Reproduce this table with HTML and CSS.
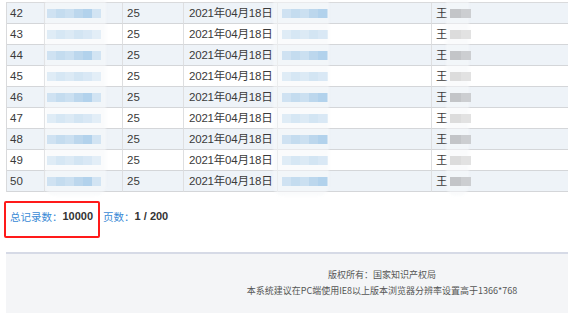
FILE: index.html
```html
<!DOCTYPE html>
<html lang="zh-CN">
<head>
<meta charset="utf-8">
<title>列表</title>
<link rel="stylesheet" href="styles.css">
</head>
<body>
<div class="page">
  <div class="table-wrap">
    <table class="grid">
      <colgroup>
        <col class="c-no"><col class="c-name"><col class="c-age"><col class="c-date"><col class="c-org"><col class="c-person">
      </colgroup>
      <tbody>
        <tr><td>42</td><td><span class="mosaic m-blue"></span></td><td>25</td><td>2021年04月18日</td><td><span class="mosaic m-blue m-org"></span></td><td>王<span class="mosaic m-gray"></span></td></tr>
        <tr><td>43</td><td><span class="mosaic m-blue"></span></td><td>25</td><td>2021年04月18日</td><td><span class="mosaic m-blue m-org"></span></td><td>王<span class="mosaic m-gray"></span></td></tr>
        <tr><td>44</td><td><span class="mosaic m-blue"></span></td><td>25</td><td>2021年04月18日</td><td><span class="mosaic m-blue m-org"></span></td><td>王<span class="mosaic m-gray"></span></td></tr>
        <tr><td>45</td><td><span class="mosaic m-blue"></span></td><td>25</td><td>2021年04月18日</td><td><span class="mosaic m-blue m-org"></span></td><td>王<span class="mosaic m-gray"></span></td></tr>
        <tr><td>46</td><td><span class="mosaic m-blue"></span></td><td>25</td><td>2021年04月18日</td><td><span class="mosaic m-blue m-org"></span></td><td>王<span class="mosaic m-gray"></span></td></tr>
        <tr><td>47</td><td><span class="mosaic m-blue"></span></td><td>25</td><td>2021年04月18日</td><td><span class="mosaic m-blue m-org"></span></td><td>王<span class="mosaic m-gray"></span></td></tr>
        <tr><td>48</td><td><span class="mosaic m-blue"></span></td><td>25</td><td>2021年04月18日</td><td><span class="mosaic m-blue m-org"></span></td><td>王<span class="mosaic m-gray"></span></td></tr>
        <tr><td>49</td><td><span class="mosaic m-blue"></span></td><td>25</td><td>2021年04月18日</td><td><span class="mosaic m-blue m-org"></span></td><td>王<span class="mosaic m-gray"></span></td></tr>
        <tr><td>50</td><td><span class="mosaic m-blue"></span></td><td>25</td><td>2021年04月18日</td><td><span class="mosaic m-blue m-org"></span></td><td>王<span class="mosaic m-gray"></span></td></tr>
      </tbody>
    </table>
    <div class="halo halo-name"></div>
    <div class="halo halo-org"></div>
    <div class="halo halo-person"></div>
  </div>

  <div class="pager">
    <span class="label">总记录数：</span><span class="num">10000</span>
    <span class="label label-pages">页数：</span><span class="num">1 / 200</span>
    <div class="mark"></div>
  </div>

  <footer class="footer">
    <p>版权所有：国家知识产权局</p>
    <p>本系统建议在PC端使用IE8以上版本浏览器分辨率设置高于1366*768</p>
  </footer>
</div>
</body>
</html>
```
FILE: styles.css
```css
html, body {
  margin: 0;
  padding: 0;
  background: #fff;
  overflow: hidden;
}
body {
  font-family: "Noto Sans CJK SC", "Noto Sans", sans-serif;
  color: #333;
}
.page {
  width: 752px;
  margin: 2px 0 0 6px;
}
.table-wrap {
  position: relative;
}
.grid {
  width: 752px;
  table-layout: fixed;
  border-collapse: separate;
  border-spacing: 0;
  border-top: 1px solid #d9dadc;
  border-left: 1px solid #d9dadc;
  font-family: "Liberation Sans", "Noto Sans CJK SC", sans-serif;
  font-size: 11.5px;
}
.c-no { width: 38px; }
.c-name { width: 78px; }
.c-age { width: 61px; }
.c-date { width: 94px; }
.c-org { width: 154px; }
.c-person { width: auto; }
.grid td {
  height: 20px;
  padding: 0 0 0 4px;
  line-height: 20px;
  border-right: 1px solid #dedfe1;
  border-bottom: 1px solid #d4d6d9;
  white-space: nowrap;
  overflow: hidden;
  color: #3a3a3a;
  vertical-align: middle;
}
.grid td:first-child { padding-left: 3px; }
.grid td:nth-child(4) { padding-left: 5px; letter-spacing: -0.2px; }
.grid tr:nth-child(odd) td { background: #eef3f8; }
.grid tr:nth-child(even) td { background: #fff; }

.mosaic {
  position: relative;
  z-index: 2;
  display: inline-block;
  vertical-align: middle;
  height: 9px;
  filter: blur(0.6px);
}
.m-blue {
  width: 54px;
  margin-left: -2px;
  background: linear-gradient(90deg,
    #cfe2f2 0 9px, #c4dcef 9px 18px, #cbe0f1 18px 27px,
    #bcd7ed 27px 36px, #b2d2ec 36px 45px, #d2e4f3 45px 54px);
}
.m-org {
  width: 46px;
  margin-left: 0;
}
.grid tr:nth-child(even) .m-blue {
  background: linear-gradient(90deg,
    #dfecf6 0 9px, #d6e7f4 9px 18px, #dceaf5 18px 27px,
    #d3e5f3 27px 36px, #d9e8f5 36px 45px, #e3eef7 45px 54px);
}
.m-gray {
  width: 21px;
  margin-left: 2px;
  background: linear-gradient(90deg, #c3c5c8 0 11px, #ccced1 11px 21px);
}
.grid tr:nth-child(even) .m-gray {
  background: linear-gradient(90deg, #dcdcdc 0 11px, #e2e2e2 11px 21px);
}

.halo {
  position: absolute;
  top: -4px;
  height: 198px;
  z-index: 1;
  background: rgba(246, 248, 250, 0.55);
  border-radius: 0 0 10px 10px;
  filter: blur(1px);
}
.halo-name { left: 39px; width: 61px; }
.halo-org { left: 267px; width: 56px; }
.halo-person { left: 440px; width: 23px; }

.pager {
  position: relative;
  display: flex;
  align-items: center;
  height: 16px;
  margin-top: 16px;
  padding-left: 4px;
  font-size: 10.5px;
}
.label { color: #3a8ad6; }
.num {
  font-family: "Liberation Sans", "Noto Sans CJK SC", sans-serif;
  font-weight: bold;
  font-size: 11px;
  color: #333;
}
.label-pages { margin-left: 10px; }
.mark {
  position: absolute;
  left: -2px;
  top: -7px;
  width: 92px;
  height: 33px;
  border: 2px solid #ff1a1a;
  border-radius: 2px;
}

.footer {
  margin-top: 28px;
  border-top: 2px solid #d6dae6;
  background: #f4f5f7;
  padding: 13px 0 14px;
  text-align: center;
  font-size: 9px;
  color: #555;
}
.footer p {
  margin: 0;
  line-height: 16px;
}
```
